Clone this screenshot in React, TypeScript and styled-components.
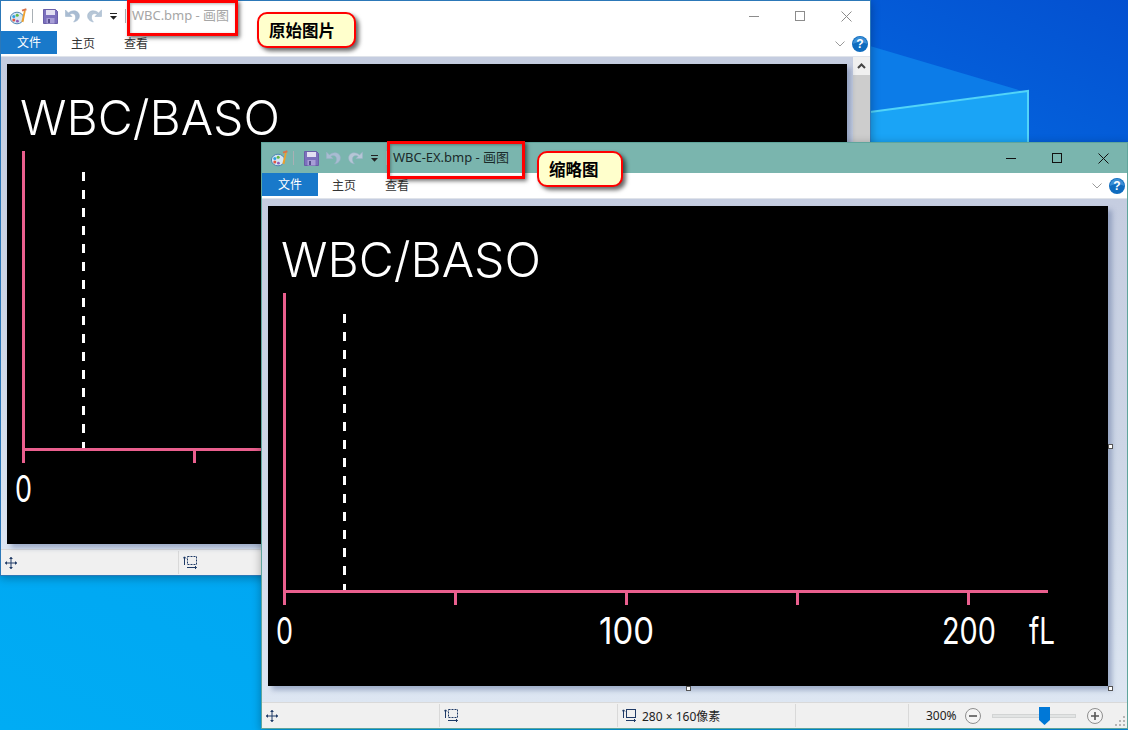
import React from "react";
import styled, { createGlobalStyle } from "styled-components";

const Global = createGlobalStyle`
  html, body { margin: 0; padding: 0; background: #0a6fe0; overflow: hidden; }
  * { box-sizing: border-box; }
`;

const Desktop = styled.div`
  position: relative;
  width: 1128px;
  height: 730px;
  overflow: hidden;
  background: linear-gradient(205deg, #0450d0 0%, #0468e0 22%, #0a86ee 48%, #00a6f2 72%, #00acf4 100%);
  font-family: "Noto Sans", "Noto Sans CJK SC", sans-serif;
`;

const Wallpaper = styled.svg`
  position: absolute;
  left: 0;
  top: 0;
`;

const WindowFrame = styled.div<{ $left: number; $top: number; $w: number; $h: number; $edge: string }>`
  position: absolute;
  left: ${p => p.$left}px;
  top: ${p => p.$top}px;
  width: ${p => p.$w}px;
  height: ${p => p.$h}px;
  display: flex;
  flex-direction: column;
  border: 1px solid ${p => p.$edge};
  background: #fff;
  box-shadow: 0 2px 9px rgba(0, 0, 0, 0.3);
`;

const TitleBar = styled.div<{ $bg: string }>`
  height: 30px;
  flex: none;
  display: flex;
  align-items: center;
  padding-right: 1px;
  background: ${p => p.$bg};
`;

const QuickAccess = styled.div`
  display: flex;
  align-items: center;
  width: 131px;
  height: 30px;
  padding-left: 8px;
  flex: none;
`;

const Sep = styled.span<{ $ml: number }>`
  width: 1px;
  height: 14px;
  margin-left: ${p => p.$ml}px;
  background: #a9b0b5;
  flex: none;
`;

const QuickIcon = styled.svg<{ $ml: number }>`
  margin-left: ${p => p.$ml}px;
  flex: none;
`;

const TitleText = styled.div<{ $active: boolean }>`
  flex: 1;
  font-size: 13px;
  letter-spacing: -0.03px;
  line-height: 28px;
  height: 30px;
  white-space: nowrap;
  color: ${p => (p.$active ? "#1a2a2a" : "#a6a6a6")};
`;

const CaptionBtn = styled.div`
  width: 46px;
  height: 30px;
  flex: none;
  display: flex;
  align-items: center;
  justify-content: center;
`;

const TabRow = styled.div`
  height: 26px;
  flex: none;
  display: flex;
  align-items: flex-start;
  background: #fff;
  border-bottom: 1px solid #dfe3ea;
`;

const FileTab = styled.div`
  width: 56px;
  height: 23px;
  background: #1979ca;
  color: #fff;
  font-size: 12px;
  line-height: 23px;
  text-align: center;
`;

const Tab = styled.div<{ $ml: number }>`
  margin-left: ${p => p.$ml}px;
  height: 23px;
  font-size: 12px;
  line-height: 25px;
  color: #333;
`;

const TabSpacer = styled.div`
  flex: 1;
`;

const TabTools = styled.div`
  display: flex;
  align-items: center;
  height: 26px;
  gap: 7px;
  padding-right: 2px;
`;

const Body = styled.div`
  flex: 1;
  min-height: 0;
  display: flex;
`;

const Paper = styled.div`
  flex: 1;
  min-width: 0;
  padding: 7px 6px;
  background: linear-gradient(180deg, #c5cde0 0%, #cdd6e6 50%, #dde6f2 100%);
`;

const Scrollbar = styled.div`
  width: 17px;
  flex: none;
  display: flex;
  flex-direction: column;
  background: #cdcdcd;
`;

const ScrollBtn = styled.div`
  height: 18px;
  background: #f0f0f0;
  display: flex;
  align-items: center;
  justify-content: center;
`;

const Bitmap = styled.div`
  position: relative;
  width: 840px;
  height: 480px;
  background: #000;
  box-shadow: 4px 4px 5px rgba(85, 105, 150, 0.45);
`;

const Handle = styled.span<{ $x: number; $y: number }>`
  position: absolute;
  left: ${p => p.$x}px;
  top: ${p => p.$y}px;
  width: 5px;
  height: 5px;
  background: #fff;
  border: 1px solid #555;
`;

const StatusBar = styled.div`
  height: 26px;
  flex: none;
  display: flex;
  align-items: stretch;
  background: #f0f0f0;
  border-top: 1px solid #d9d9d9;
  overflow: hidden;
`;

const StatusCell = styled.div<{ $w: number }>`
  width: ${p => p.$w}px;
  flex: none;
  display: flex;
  align-items: center;
  gap: 6px;
  padding-left: 4px;
  margin: 1px 0;
  border-right: 1px solid #d9d9d9;
  font-size: 12px;
  color: #222;
`;

const ZoomCell = styled.div`
  flex: 1;
  position: relative;
  display: flex;
  align-items: center;
  padding-left: 17px;
  font-size: 12px;
  color: #222;
`;

const ZoomLabel = styled.span`
  width: 39px;
  flex: none;
`;

const ZoomTrack = styled.div`
  position: relative;
  width: 84px;
  height: 4px;
  margin: 0 11px;
  background: #e2e4e4;
  border: 1px solid #d2d4d4;
  flex: none;
`;

const ZoomThumb = styled.svg`
  position: absolute;
  left: 46px;
  top: -8px;
`;

const Grip = styled.svg`
  position: absolute;
  right: 1px;
  bottom: 1px;
`;

const RedBox = styled.div<{ $x: number; $y: number; $w: number; $h: number }>`
  position: absolute;
  left: ${p => p.$x}px;
  top: ${p => p.$y}px;
  width: ${p => p.$w}px;
  height: ${p => p.$h}px;
  border: 3px solid #f00;
  box-shadow: 2px 2px 4px rgba(0, 0, 0, 0.55), inset 1px 1px 3px rgba(0, 0, 0, 0.3);
`;

const Callout = styled.div<{ $x: number; $y: number; $w: number; $h: number }>`
  position: absolute;
  left: ${p => p.$x}px;
  top: ${p => p.$y}px;
  width: ${p => p.$w}px;
  height: ${p => p.$h}px;
  background: #ffffcc;
  border: 2px solid #f00;
  border-radius: 10px;
  box-shadow: 3px 3px 4px rgba(0, 0, 0, 0.6);
  color: #000;
  font-family: "Noto Sans CJK SC", sans-serif;
  font-weight: 700;
  font-size: 16.5px;
  line-height: 32px;
  padding-left: 10px;
`;

const ChartSvg = styled.svg`
  position: absolute;
  left: 0;
  top: 0;
`;

const HeadText = styled.text`
  font-family: Inter, "Liberation Sans", sans-serif;
  font-weight: 300;
  font-size: 48px;
  fill: #fff;
`;

const AxisText = styled.text`
  font-family: Inter, "Liberation Sans", sans-serif;
  font-weight: 400;
  font-size: 37px;
  fill: #fff;
`;

const PINK = "#ea5f8e";
const NAVY = "#1f3a66";

function Chart() {
  const ticks = [187.5, 358.5, 529.5, 700.5];
  return (
    <ChartSvg width={840} height={480} viewBox="0 0 840 480">
      <HeadText x={13} y={71} textLength={260} lengthAdjust="spacingAndGlyphs">WBC/BASO</HeadText>
      <line x1={16.5} y1={87} x2={16.5} y2={399} stroke={PINK} strokeWidth={3} />
      <line x1={16} y1={385.5} x2={780} y2={385.5} stroke={PINK} strokeWidth={3} />
      {ticks.map(t => (
        <line key={t} x1={t} y1={386} x2={t} y2={399} stroke={PINK} strokeWidth={3} />
      ))}
      <line x1={76.5} y1={108} x2={76.5} y2={384} stroke="#fff" strokeWidth={3} strokeDasharray="9 9" />
      <AxisText x={8} y={438} textLength={17} lengthAdjust="spacingAndGlyphs">0</AxisText>
      <AxisText x={331} y={438} textLength={55} lengthAdjust="spacingAndGlyphs">100</AxisText>
      <AxisText x={674} y={438} textLength={54} lengthAdjust="spacingAndGlyphs">200</AxisText>
      <AxisText x={761} y={438} textLength={26} lengthAdjust="spacingAndGlyphs">fL</AxisText>
    </ChartSvg>
  );
}

const PaletteIcon = () => (
  <QuickIcon $ml={1} width={17} height={17} viewBox="0 0 17 17">
    <ellipse cx="7" cy="10" rx="6.6" ry="5.8" fill="#d5e6f3" stroke="#4f86b4" />
    <circle cx="3.8" cy="8.6" r="1.5" fill="#2f9fe0" />
    <circle cx="7.2" cy="7.2" r="1.5" fill="#63b946" />
    <circle cx="3.8" cy="12" r="1.5" fill="#e2553f" />
    <circle cx="7.4" cy="13.2" r="1.4" fill="#8d5bb8" />
    <path d="M14.2 2 L11.4 13.6 L13.4 14.2 L15.8 2.4 Z" fill="#eda02e" />
    <path d="M12 2.6 L16.4 1.2" stroke="#d9744a" strokeWidth="2" />
  </QuickIcon>
);

const SaveIcon = () => (
  <QuickIcon $ml={10} width={15} height={15} viewBox="0 0 15 15">
    <path d="M0.5 0.5H12.5L14.5 2.5V14.5H0.5Z" fill="#7c70bd" stroke="#6a5fa8" />
    <rect x="3" y="1" width="9" height="5" fill="#e3e0f2" />
    <rect x="3.5" y="9" width="8" height="5.5" fill="#a79ed6" />
    <rect x="5" y="10" width="2" height="4" fill="#57508f" />
  </QuickIcon>
);

const UndoIcon = ({ flip, ml }: { flip?: boolean; ml: number }) => (
  <QuickIcon $ml={ml} width={15} height={14} viewBox="0 0 15 14">
    <g transform={flip ? "translate(15,0) scale(-1,1)" : undefined}>
      <path d="M0.5 1V7.5H7L4.8 5.3C7 3.8 10.5 4.6 10.6 8C10.7 10 9.8 11.6 8.6 13C12.4 12.4 14.6 9.6 14.4 6.6C14 1.8 8 0 3.4 3.9Z" fill={flip ? "#b6c6d6" : "#a9bcd2"} stroke="#9bb0c8" strokeWidth="0.5" />
    </g>
  </QuickIcon>
);

const DropIcon = () => (
  <QuickIcon $ml={8} width={7} height={7} viewBox="0 0 7 7">
    <rect x="0" y="0" width="7" height="1" fill="#222" />
    <path d="M0 3H7L3.5 6.8Z" fill="#222" />
  </QuickIcon>
);

const MinIcon = ({ color }: { color: string }) => (
  <svg width={10} height={10} viewBox="0 0 10 10"><path d="M0 5.5H10" stroke={color} /></svg>
);
const MaxIcon = ({ color }: { color: string }) => (
  <svg width={10} height={10} viewBox="0 0 10 10"><rect x=".5" y=".5" width="9" height="9" fill="none" stroke={color} /></svg>
);
const CloseIcon = ({ color }: { color: string }) => (
  <svg width={11} height={11} viewBox="0 0 11 11"><path d="M.5 .5L10.5 10.5M10.5 .5L.5 10.5" stroke={color} /></svg>
);

const Chevron = () => (
  <svg width={10} height={6} viewBox="0 0 10 6"><path d="M.5 .5L5 5L9.5 .5" fill="none" stroke="#9a9a9a" /></svg>
);

const HelpIcon = () => (
  <svg width={16} height={16} viewBox="0 0 16 16">
    <circle cx="8" cy="8" r="8" fill="#0f6cbf" />
    <path d="M0.8 8A7.2 7.2 0 0 1 15.2 8C11 5.5 5 5.5 0.8 8Z" fill="#3b8fd6" />
    <text x="8" y="12.4" textAnchor="middle" fontFamily="Liberation Sans" fontWeight="700" fontSize="12" fill="#fff">?</text>
  </svg>
);

const MoveIcon = () => (
  <svg width={12} height={12} viewBox="0 0 12 12">
    <path d="M6 0V12M0 6H12" stroke={NAVY} />
    <path d="M6 0L4 2H8ZM6 12L4 10H8ZM0 6L2 4V8ZM12 6L10 4V8Z" fill={NAVY} />
  </svg>
);

const RectSizeIcon = ({ dashed }: { dashed?: boolean }) => (
  <svg width={14} height={13} viewBox="0 0 14 13">
    <path d="M1.5 1V9M0 2.5L1.5 .8L3 2.5" fill="none" stroke={NAVY} />
    <rect x="4.5" y=".5" width="9" height="8" fill="none" stroke={NAVY} strokeDasharray={dashed ? "2 1" : undefined} />
    <path d="M4 11.5H13.5M12 10L13.5 11.5L12 13" fill="none" stroke={NAVY} />
  </svg>
);

const RoundBtn = ({ plus }: { plus?: boolean }) => (
  <svg width={16} height={16} viewBox="0 0 16 16" style={{ flex: "none" }}>
    <circle cx="8" cy="8" r="7.5" fill="#f4f4f4" stroke="#8f8f8f" />
    <path d={plus ? "M4 8H12M8 4V12" : "M4 8H12"} stroke="#555" strokeWidth="1.6" />
  </svg>
);

type PaintProps = {
  left: number;
  top: number;
  w: number;
  h: number;
  edge: string;
  titleBg: string;
  title: string;
  active: boolean;
  scrollbar?: boolean;
  sizeText?: boolean;
};

function PaintWindow({ left, top, w, h, edge, titleBg, title, active, scrollbar, sizeText }: PaintProps) {
  const cap = active ? "#111" : "#8c8c8c";
  return (
    <WindowFrame $left={left} $top={top} $w={w} $h={h} $edge={edge}>
      <TitleBar $bg={titleBg}>
        <QuickAccess>
          <PaletteIcon />
          <Sep $ml={5} />
          <SaveIcon />
          <UndoIcon ml={7} />
          <UndoIcon flip ml={7} />
          <DropIcon />
          <Sep $ml={8} />
        </QuickAccess>
        <TitleText $active={active}>{title}</TitleText>
        <CaptionBtn><MinIcon color={cap} /></CaptionBtn>
        <CaptionBtn><MaxIcon color={cap} /></CaptionBtn>
        <CaptionBtn><CloseIcon color={cap} /></CaptionBtn>
      </TitleBar>
      <TabRow>
        <FileTab>文件</FileTab>
        <Tab $ml={14}>主页</Tab>
        <Tab $ml={29}>查看</Tab>
        <TabSpacer />
        <TabTools>
          <Chevron />
          <HelpIcon />
        </TabTools>
      </TabRow>
      <Body>
        <Paper>
          <Bitmap>
            <Chart />
            <Handle $x={840} $y={238} />
            <Handle $x={418} $y={480} />
            <Handle $x={840} $y={480} />
          </Bitmap>
        </Paper>
        {scrollbar && (
          <Scrollbar>
            <ScrollBtn>
              <svg width={9} height={6} viewBox="0 0 9 6"><path d="M1 5L4.5 1.5L8 5" fill="none" stroke="#444" strokeWidth="2" /></svg>
            </ScrollBtn>
          </Scrollbar>
        )}
      </Body>
      <StatusBar>
        <StatusCell $w={178}><MoveIcon /></StatusCell>
        <StatusCell $w={178}><RectSizeIcon dashed /></StatusCell>
        <StatusCell $w={178}>
          <RectSizeIcon />
          {sizeText && <span>280 × 160像素</span>}
        </StatusCell>
        <StatusCell $w={113} />
        <ZoomCell>
          <ZoomLabel>300%</ZoomLabel>
          <RoundBtn />
          <ZoomTrack>
            <ZoomThumb width={11} height={18} viewBox="0 0 11 18">
              <path d="M0 0H11V13L5.5 18L0 13Z" fill="#0078d7" />
            </ZoomThumb>
          </ZoomTrack>
          <RoundBtn plus />
          <Grip width={11} height={11} viewBox="0 0 11 11">
            <g fill="#b5b5b5">
              <rect x="8" y="0" width="2" height="2" />
              <rect x="4" y="4" width="2" height="2" />
              <rect x="8" y="4" width="2" height="2" />
              <rect x="0" y="8" width="2" height="2" />
              <rect x="4" y="8" width="2" height="2" />
              <rect x="8" y="8" width="2" height="2" />
            </g>
          </Grip>
        </ZoomCell>
      </StatusBar>
    </WindowFrame>
  );
}

export default function App() {
  return (
    <Desktop>
      <Global />
      <Wallpaper width={1128} height={730} viewBox="0 0 1128 730">
        <path d="M870 46L1022 91L870 112Z" fill="#0c7ce8" />
        <path d="M870 112L1028 91V142H870Z" fill="#1aa4f6" />
        <path d="M870 112L1028 91V142" fill="none" stroke="#52d4f8" strokeWidth="2" />
      </Wallpaper>
      <PaintWindow left={0} top={0} w={871} h={576} edge="#2c78b8" titleBg="#fff" title="WBC.bmp - 画图" active={false} scrollbar />
      <PaintWindow left={261} top={142} w={867} h={587} edge="#5fa59c" titleBg="#7ab5ae" title="WBC-EX.bmp - 画图" active sizeText />
      <RedBox $x={127} $y={0} $w={111} $h={36} />
      <RedBox $x={387} $y={141} $w={138} $h={38} />
      <Callout $x={257} $y={12} $w={99} $h={36}>原始图片</Callout>
      <Callout $x={537} $y={151} $w={86} $h={36}>缩略图</Callout>
    </Desktop>
  );
}
